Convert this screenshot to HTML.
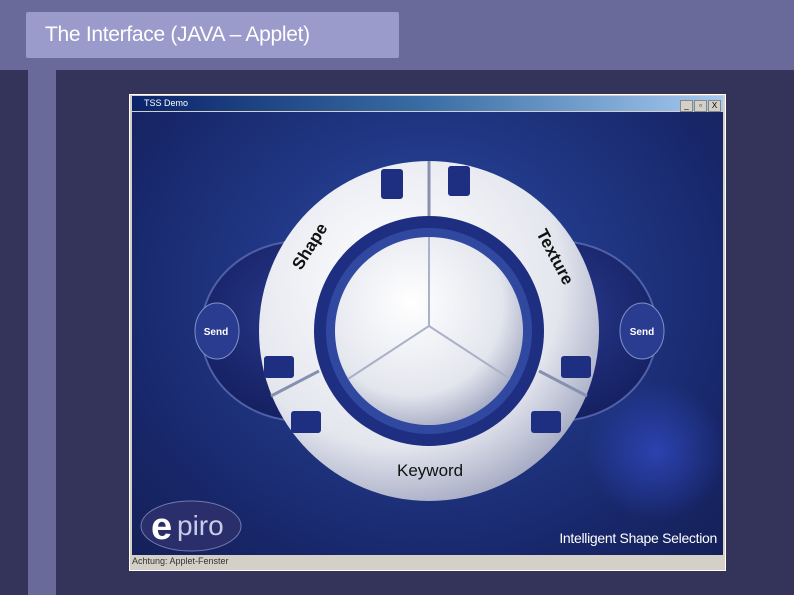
<!DOCTYPE html>
<html><head><style>
body{margin:0;width:794px;height:595px;overflow:hidden;background:#34345a;font-family:"Liberation Sans",sans-serif;position:relative}
.top{position:absolute;left:0;top:0;width:794px;height:70px;background:#6a6a9a}
.title{position:absolute;left:26px;top:12px;width:373px;height:46px;background:#9a9acb;border-radius:2px;color:#fff;font-size:21px;line-height:46px;padding-left:19px;box-sizing:border-box;letter-spacing:-0.3px}
.stripe{position:absolute;left:28px;top:70px;width:28px;height:525px;background:#6a6a9a}
.win{position:absolute;left:129px;top:94px;width:597px;height:477px;background:#d4d0c8;border:1px solid #fff;box-sizing:border-box}
.tb{position:absolute;left:2px;top:1px;right:2px;height:15px;background:linear-gradient(90deg,#0a246a,#3a6ea5 50%,#a6caf0);color:#fff;font-size:9px;line-height:15px;padding-left:12px}
.btns{position:absolute;right:2px;top:2px}
.btns span{display:inline-block;width:11px;height:10px;background:#d4d0c8;border:1px solid #888;margin-left:1px;font-size:8px;line-height:10px;text-align:center;color:#000}
.ct{position:absolute;left:2px;top:17px;width:591px;height:443px;background:radial-gradient(ellipse at 50% 40%,#3a55b0 0%,#223a8a 35%,#18276a 75%,#142058 100%);overflow:hidden}
.sb{position:absolute;left:2px;top:461px;font-size:9px;color:#333}
</style></head><body>
<div class="top"></div>
<div class="title">The Interface (JAVA – Applet)</div>
<div class="stripe"></div>
<div class="win">
<div class="tb">TSS Demo<div class="btns"><span>_</span><span>▫</span><span>X</span></div></div>
<div class="ct">
<svg width="591" height="443" viewBox="131 111 591 443">
<defs>
<radialGradient id="w" cx="40%" cy="35%" r="70%"><stop offset="0" stop-color="#fff"/><stop offset=".7" stop-color="#e4e6ee"/><stop offset="1" stop-color="#a0a6c0"/></radialGradient>
<radialGradient id="g" cx="50%" cy="50%" r="50%"><stop offset="0" stop-color="#3048c0" stop-opacity=".8"/><stop offset="1" stop-color="#3048c0" stop-opacity="0"/></radialGradient>
<radialGradient id="wing" cx="50%" cy="40%" r="60%"><stop offset="0" stop-color="#2a3a90"/><stop offset="1" stop-color="#142060"/></radialGradient>
</defs>
<circle cx="655" cy="450" r="70" fill="url(#g)"/>
<ellipse cx="300" cy="330" rx="100" ry="90" fill="url(#wing)" stroke="#5060a8" stroke-width="2"/>
<ellipse cx="556" cy="330" rx="100" ry="90" fill="url(#wing)" stroke="#5060a8" stroke-width="2"/>
<ellipse cx="216" cy="330" rx="22" ry="28" fill="#2a3c90" stroke="#8090c8"/>
<ellipse cx="641" cy="330" rx="22" ry="28" fill="#2a3c90" stroke="#8090c8"/>
<text x="215" y="334" fill="#fff" font-size="10" font-weight="bold" text-anchor="middle">Send</text>
<text x="641" y="334" fill="#fff" font-size="10" font-weight="bold" text-anchor="middle">Send</text>
<circle cx="428" cy="330" r="170" fill="url(#w)"/>
<line x1="428" y1="160" x2="428" y2="220" stroke="#8890b0" stroke-width="3"/>
<line x1="270" y1="395" x2="318" y2="370" stroke="#8890b0" stroke-width="3"/>
<line x1="586" y1="395" x2="538" y2="370" stroke="#8890b0" stroke-width="3"/>
<g fill="#1e2e80"><rect x="380" y="168" width="22" height="30" rx="3"/><rect x="447" y="165" width="22" height="30" rx="3"/><rect x="263" y="355" width="30" height="22" rx="3"/><rect x="290" y="410" width="30" height="22" rx="3"/><rect x="560" y="355" width="30" height="22" rx="3"/><rect x="530" y="410" width="30" height="22" rx="3"/></g>
<circle cx="428" cy="330" r="115" fill="#1e2e80"/>
<circle cx="428" cy="330" r="103" fill="#3048a0"/>
<circle cx="428" cy="330" r="94" fill="url(#w)"/>
<path d="M428 236V325L347 378M428 325L509 378" stroke="#aab0c8" stroke-width="2" fill="none"/>
<text x="300" y="270" fill="#111" font-size="17" font-weight="bold" transform="rotate(-58 300 270)">Shape</text>
<text x="535" y="232" fill="#111" font-size="17" font-weight="bold" transform="rotate(62 535 232)">Texture</text>
<text x="396" y="475" fill="#111" font-size="17">Keyword</text>
<ellipse cx="190" cy="525" rx="50" ry="25" fill="#2a2e6a" stroke="#7078b0"/>
<text x="150" y="538" fill="#fff" font-size="38" font-weight="bold">e</text>
<text x="176" y="534" fill="#c8cce8" font-size="28">piro</text>
<text x="716" y="542" fill="#fff" font-size="14" text-anchor="end" letter-spacing="-0.3">Intelligent Shape Selection</text>
</svg>
</div>
<div class="sb">Achtung: Applet-Fenster</div>
</div>
</body></html>
